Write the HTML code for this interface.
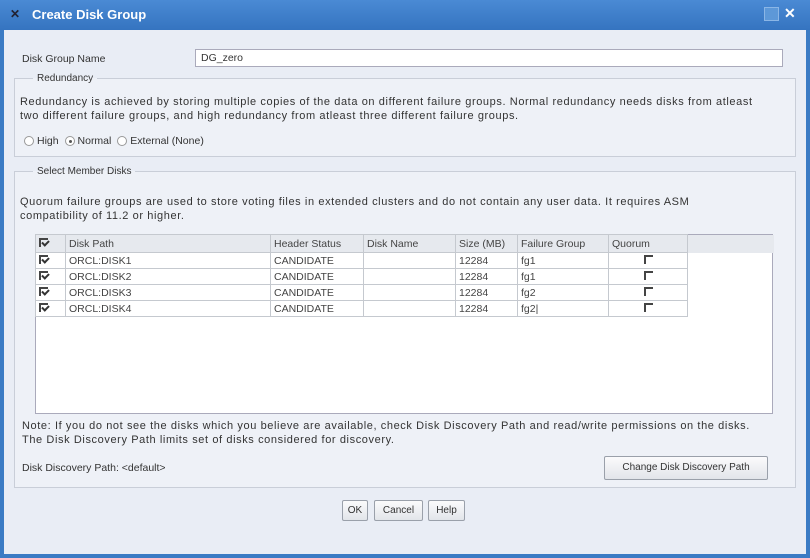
<!DOCTYPE html><html><head><style>
*{box-sizing:border-box}body{margin:0;width:810px;height:558px;background:#3b7bc4;font-family:"Liberation Sans",sans-serif;font-size:10.5px;color:#333;position:relative;overflow:hidden}
.abs{position:absolute}
.p{font-size:11px;letter-spacing:0.6px;white-space:nowrap;line-height:14px}
.title{left:0;top:0;width:810px;height:30px;background:linear-gradient(#4a8ad4,#3574c0);color:#fff;font-weight:bold;font-size:13px}
.body{left:4px;top:30px;width:802px;height:524px;background:#e9edf5}
fieldset{position:absolute;border:1px solid #c9ced8;margin:0;padding:0;background:#eef1f7}
legend{font-size:10px;padding:0 4px;margin-left:18px;color:#333}
.btn{position:absolute;border:1px solid #9aa0aa;border-radius:2px;background:linear-gradient(#fbfbfc,#e2e5ea);text-align:center;font-size:10px;color:#333}
table{border-collapse:collapse;font-size:10.5px}
td,th{border:1px solid #c5c9cf;padding:0 3px;height:16px;text-align:left;font-weight:normal;color:#444}
th{height:18px;background:#e6e9ee}
.cb{display:inline-block;width:9px;height:9px;border-top:2px solid #444;border-left:2px solid #444;position:relative}
.cb.on::after{content:"";position:absolute;left:1px;top:0;width:5px;height:3px;border-left:2px solid #333;border-bottom:2px solid #333;transform:rotate(-45deg)}
.rad{display:inline-block;width:10px;height:10px;border:1px solid #999;border-radius:50%;background:#fff;vertical-align:-2px;margin-right:3px;position:relative}
</style></head><body>
<div class="abs title"><span class="abs" style="left:10px;top:7px;font-size:12px;color:#223">✕</span><span class="abs" style="left:32px;top:7px">Create Disk Group</span>
<span class="abs" style="left:764px;top:7px;width:15px;height:14px;background:#5d98d8;border:1px solid #8bb6e6"></span>
<span class="abs" style="left:784px;top:5px;font-size:14px">✕</span></div>
<div class="abs body"></div>
<div class="abs" style="left:22px;top:53px">Disk Group Name</div>
<div class="abs" style="left:195px;top:49px;width:588px;height:18px;background:#fff;border:1px solid #aab;padding:2px 5px">DG_zero</div>
<fieldset style="left:14px;top:73px;width:782px;height:84px"><legend>Redundancy</legend></fieldset>
<div class="abs p" style="left:20px;top:95px">Redundancy is achieved by storing multiple copies of the data on different failure groups. Normal redundancy needs disks from atleast<br>two different failure groups, and high redundancy from atleast three different failure groups.</div>
<div class="abs" style="left:24px;top:135px"><span class="rad"></span>High <span class="rad" style="margin-left:3px"><span class="abs" style="left:3px;top:3px;width:3px;height:3px;background:#555;border-radius:50%"></span></span>Normal <span class="rad" style="margin-left:3px"></span>External (None)</div>
<fieldset style="left:14px;top:166px;width:782px;height:322px"><legend>Select Member Disks</legend></fieldset>
<div class="abs p" style="left:20px;top:195px">Quorum failure groups are used to store voting files in extended clusters and do not contain any user data. It requires ASM<br>compatibility of 11.2 or higher.</div>
<div class="abs" style="left:35px;top:234px;width:738px;height:180px;background:#fff;border:1px solid #aab"></div>
<table class="abs" style="left:35px;top:234px">
<tr><th style="width:30px"><span class="cb on"></span></th><th style="width:205px">Disk Path</th><th style="width:93px">Header Status</th><th style="width:92px">Disk Name</th><th style="width:62px">Size (MB)</th><th style="width:91px">Failure Group</th><th style="width:79px">Quorum</th><th style="width:86px;border:none;background:#e6e9ee"></th></tr>
<tr><td><span class="cb on"></span></td><td>ORCL:DISK1</td><td>CANDIDATE</td><td></td><td>12284</td><td>fg1</td><td style="text-align:center"><span class="cb"></span></td></tr>
<tr><td><span class="cb on"></span></td><td>ORCL:DISK2</td><td>CANDIDATE</td><td></td><td>12284</td><td>fg1</td><td style="text-align:center"><span class="cb"></span></td></tr>
<tr><td><span class="cb on"></span></td><td>ORCL:DISK3</td><td>CANDIDATE</td><td></td><td>12284</td><td>fg2</td><td style="text-align:center"><span class="cb"></span></td></tr>
<tr><td><span class="cb on"></span></td><td>ORCL:DISK4</td><td>CANDIDATE</td><td></td><td>12284</td><td>fg2|</td><td style="text-align:center"><span class="cb"></span></td></tr>
</table>
<div class="abs p" style="left:22px;top:419px">Note: If you do not see the disks which you believe are available, check Disk Discovery Path and read/write permissions on the disks.<br>The Disk Discovery Path limits set of disks considered for discovery.</div>
<div class="abs" style="left:22px;top:462px">Disk Discovery Path: &lt;default&gt;</div>
<div class="btn" style="left:604px;top:456px;width:164px;height:24px;line-height:22px">Change Disk Discovery Path</div>
<div class="btn" style="left:342px;top:500px;width:26px;height:21px;line-height:19px">OK</div>
<div class="btn" style="left:374px;top:500px;width:49px;height:21px;line-height:19px">Cancel</div>
<div class="btn" style="left:428px;top:500px;width:37px;height:21px;line-height:19px">Help</div>
</body></html>
